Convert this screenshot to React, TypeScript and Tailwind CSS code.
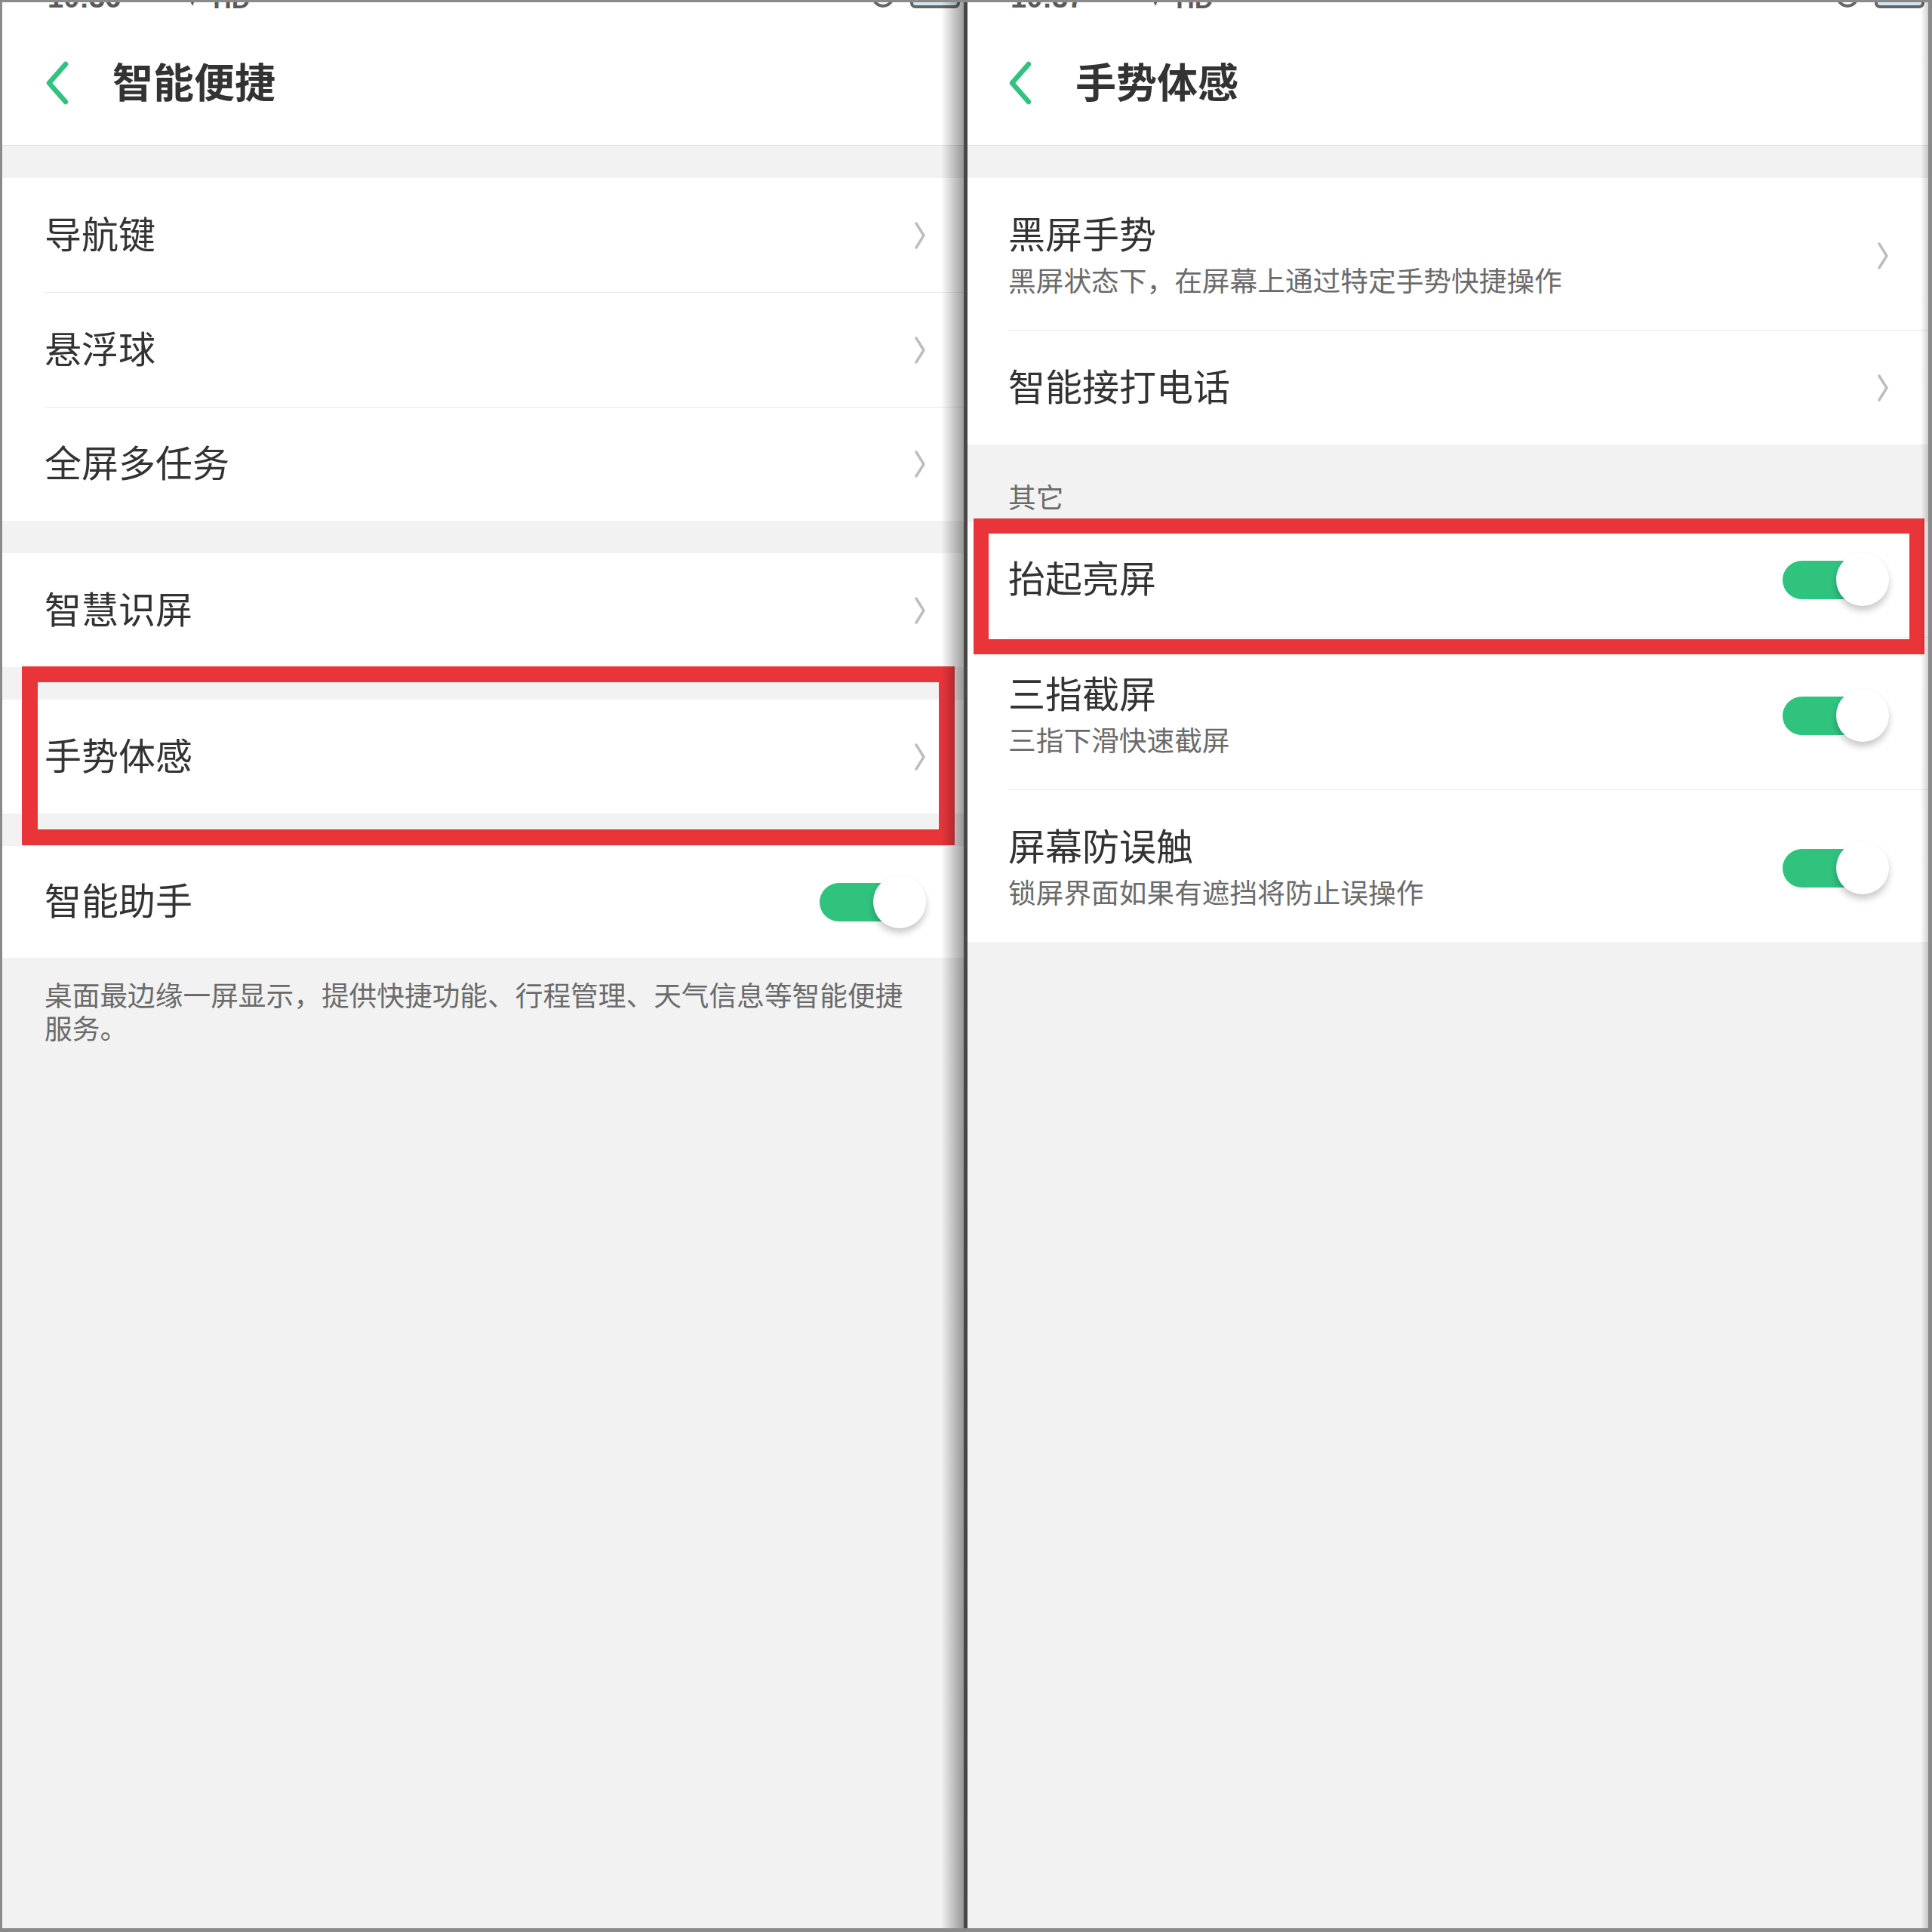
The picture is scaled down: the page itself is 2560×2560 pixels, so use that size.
import type { ReactNode } from 'react';

const cjk = "font-['Noto_Sans_CJK_SC','Noto_Sans',sans-serif]";

function BackArrow() {
  return (
    <svg width="32" height="58" viewBox="0 0 32 58" aria-hidden="true">
      <path
        d="M28 4 L6 29 L28 54"
        fill="none"
        stroke="#32c27f"
        strokeWidth="6.5"
        strokeLinecap="round"
        strokeLinejoin="round"
      />
    </svg>
  );
}

function Chevron() {
  return (
    <svg width="16" height="38" viewBox="0 0 16 38" aria-hidden="true">
      <path
        d="M3 3 L13 19 L3 35"
        fill="none"
        stroke="#bdbdbd"
        strokeWidth="3.5"
        strokeLinecap="round"
        strokeLinejoin="round"
      />
    </svg>
  );
}

function Toggle() {
  return (
    <div className="relative flex h-[70px] w-[141px] items-center">
      <div className="h-[51px] w-[120px] rounded-full bg-[#30c37e]" />
      <div className="absolute right-0 top-0 h-[70px] w-[70px] rounded-full bg-white shadow-[0_6px_10px_rgba(0,0,0,0.22)]" />
    </div>
  );
}

function StatusBar({ time }: { time: string }) {
  return (
    <div className="h-[8px] overflow-hidden">
      <div className="-mt-[27px] flex h-[40px] items-end justify-between pl-[4px] pr-[5px] font-['Liberation_Sans',sans-serif] text-[38px] font-bold leading-none text-[#5a5a5a]">
        <div className="flex items-end">
          <span>{time}</span>
          <span className="ml-[22px] text-[30px]">···</span>
          <svg width="26" height="30" viewBox="0 0 26 30" className="mb-[6px] ml-[30px]" aria-hidden="true">
            <path d="M2 4 L13 28 L24 4 Z" fill="#5a5a5a" />
          </svg>
          <span className="ml-[14px] text-[34px]">HD</span>
        </div>
        <div className="mb-[5px] flex items-end gap-[20px]">
          <svg width="32" height="32" viewBox="0 0 32 32" aria-hidden="true">
            <circle cx="16" cy="16" r="13" fill="none" stroke="#666" strokeWidth="4" />
          </svg>
          <svg width="66" height="30" viewBox="0 0 66 30" aria-hidden="true">
            <rect x="2" y="2" width="62" height="26" rx="5" fill="#cdeaf2" stroke="#666" strokeWidth="4" />
          </svg>
        </div>
      </div>
    </div>
  );
}

function Header({ time, title, padL }: { time: string; title: string; padL: string }) {
  return (
    <div className={`h-[190px] border-b border-[#dedede] bg-white ${padL}`}>
      <StatusBar time={time} />
      <div className="flex h-[181px] items-center pt-[17px]">
        <BackArrow />
        <span className={`ml-[58px] pb-[6px] text-[54px] font-bold leading-none text-[#333] ${cjk}`}>{title}</span>
      </div>
    </div>
  );
}

type RowProps = {
  title: string;
  sub?: string;
  height: string;
  last?: boolean;
  right: ReactNode;
  padR: string;
};

function Row({ title, sub, height, last, right, padR }: RowProps) {
  return (
    <div
      className={`flex items-center justify-between ${height} ${padR} ${last ? '' : 'border-b border-[#ebebeb]'} ${sub ? 'pt-[5px]' : ''}`}
    >
      {sub ? (
        <div className="flex flex-col pb-[6px]">
          <span className="text-[49px] leading-[56px] text-[#333]">{title}</span>
          <span className="mt-[12px] text-[36.7px] leading-[44px] text-[#6b6b6b]">{sub}</span>
        </div>
      ) : (
        <span className="pb-[8px] text-[49px] leading-[56px] text-[#333]">{title}</span>
      )}
      {right}
    </div>
  );
}

function Gap() {
  return <div className="h-[43px]" />;
}

function LeftPanel() {
  const pr = 'pr-[50px]';
  return (
    <div className={`relative w-[1274px] shrink-0 bg-[#f2f2f2] ${cjk}`}>
      <Header time="10:36" title="智能便捷" padL="pl-[56px]" />
      <Gap />
      <div className="bg-white pl-[56px]">
        <Row title="导航键" height="h-[152px]" padR={pr} right={<Chevron />} />
        <Row title="悬浮球" height="h-[152px]" padR={pr} right={<Chevron />} />
        <Row title="全屏多任务" height="h-[150px]" padR={pr} last right={<Chevron />} />
      </div>
      <Gap />
      <div className="bg-white pl-[56px]">
        <Row title="智慧识屏" height="h-[151px]" padR={pr} last right={<Chevron />} />
      </div>
      <Gap />
      <div className="bg-white pl-[56px]">
        <Row title="手势体感" height="h-[151px]" padR={pr} last right={<Chevron />} />
      </div>
      <Gap />
      <div className="bg-white pl-[56px]">
        <Row title="智能助手" height="h-[148px]" padR={pr} last right={<Toggle />} />
      </div>
      <p className="pl-[56px] pt-[26px] text-[36.7px] leading-[44px] text-[#6b6b6b]">
        桌面最边缘一屏显示，提供快捷功能、行程管理、天气信息等智能便捷
        <br />
        服务。
      </p>

      <div className="pointer-events-none absolute left-[26px] top-[880px] h-[237px] w-[1236px] border-[21px] border-[#e9353a]" />
      <div className="pointer-events-none absolute bottom-0 right-0 top-0 w-[30px] bg-linear-to-r from-transparent to-[rgba(0,0,0,0.38)]" />
    </div>
  );
}

function RightPanel() {
  const pr = 'pr-[52px]';
  return (
    <div className={`relative min-w-0 flex-1 bg-[#f2f2f2] ${cjk}`}>
      <Header time="10:37" title="手势体感" padL="pl-[53px]" />
      <Gap />
      <div className="bg-white pl-[54px]">
        <Row
          title="黑屏手势"
          sub="黑屏状态下，在屏幕上通过特定手势快捷操作"
          height="h-[202px]"
          padR={pr}
          right={<Chevron />}
        />
        <Row title="智能接打电话" height="h-[151px]" padR={pr} last right={<Chevron />} />
      </div>
      <div className="flex h-[103px] items-end pb-[13px] pl-[54px] text-[36.7px] leading-[44px] text-[#6b6b6b]">
        其它
      </div>
      <div className="bg-white pl-[54px]">
        <Row title="抬起亮屏" height="h-[153px]" padR={pr} right={<Toggle />} />
        <Row title="三指截屏" sub="三指下滑快速截屏" height="h-[202px]" padR={pr} right={<Toggle />} />
        <Row
          title="屏幕防误触"
          sub="锁屏界面如果有遮挡将防止误操作"
          height="h-[201px]"
          padR={pr}
          last
          right={<Toggle />}
        />
      </div>

      <div className="pointer-events-none absolute left-[8px] top-[684px] h-[180px] w-[1260px] border-[20px] border-[#e9353a]" />
      <div className="pointer-events-none absolute bottom-0 right-0 top-0 w-[10px] bg-linear-to-r from-transparent to-[rgba(0,0,0,0.18)]" />
    </div>
  );
}

export default function App() {
  return (
    <div className="flex h-[2560px] w-[2560px] flex-col bg-[#8a8a8a] pb-[5px] pl-[3px] pr-[5px] pt-[3px]">
      <div className="flex min-h-0 flex-1">
        <LeftPanel />
        <div className="w-[5px] shrink-0 bg-[#474747]" />
        <RightPanel />
      </div>
    </div>
  );
}
